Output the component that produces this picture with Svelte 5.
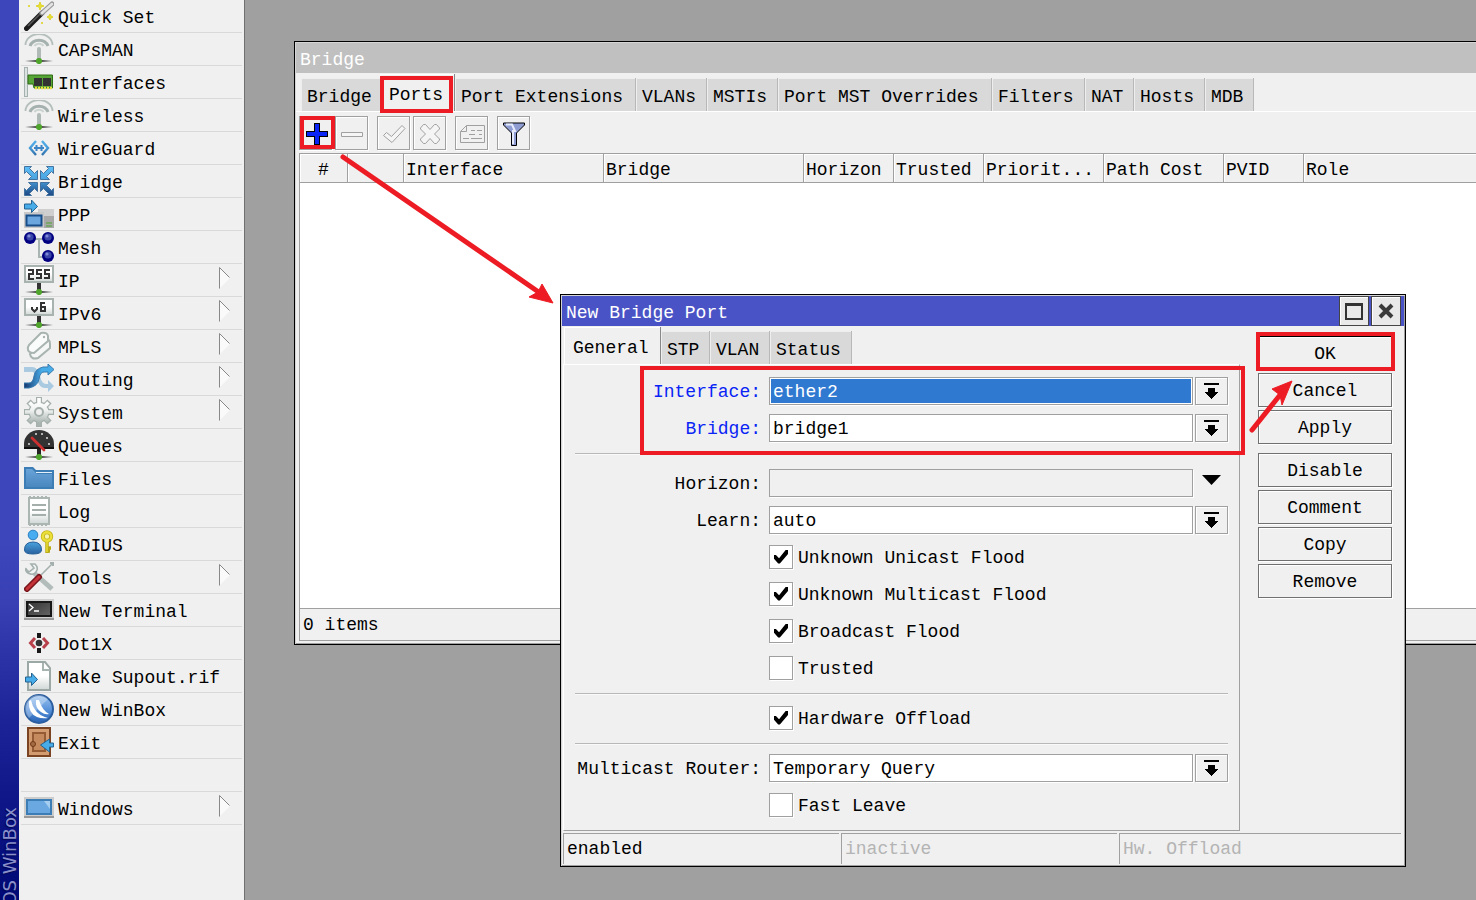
<script>
  const base = `<path d="M1 27h28" stroke="url(#fade)" stroke-width="1.6"/><circle cx="15" cy="27" r="3.1" fill="#4fa52c"/>`;
  const antenna = `<path d="M1.500 11a13.500 11 0 0 1 27 0" fill="none" stroke="#b4bfbc" stroke-width="1.800"/><path d="M6 12a9.500 8.500 0 0 1 18 0" fill="none" stroke="#a5b1ae" stroke-width="3"/><path d="M10.500 12a5 4 0 0 1 9 0" fill="none" stroke="#ccd4d2" stroke-width="2"/><path d="M15 15v12" stroke="#afbab7" stroke-width="4" stroke-linecap="round"/>${base}`;
  const board = `<rect x="1" y="1" width="28" height="16" fill="url(#paper)" stroke="#a8b3b0" stroke-width="2"/><path d="M15 18v7" stroke="#333" stroke-width="4"/>${base}`;
  const ball = (x, y) => `<circle cx="${x}" cy="${y}" r="6" fill="#000080"/><circle cx="${x}" cy="${y - 1}" r="3.6" fill="#3a45a8"/><circle cx="${x - 1}" cy="${y - 2}" r="1.6" fill="#8089d8"/>`;
  const corner = 'M.5.500H7.500L5.500 2.500 10.500 7.500 13.500 4.500V13.500H4.500L7.500 10.500 2.500 5.500.500 7.500z';

  const art = {
    wand: `<path d="M2.500 27.500L18 12" stroke="#1c1c1c" stroke-width="5" stroke-linecap="round"/><path d="M4 25L17 12" stroke="#5a5a5a" stroke-width="1.500"/><path d="M18 12l10-9" stroke="#9a9a9a" stroke-width="5" stroke-linecap="round"/><path d="M18 12l10-9" stroke="#e4e4e4" stroke-width="2.500" stroke-linecap="round"/><path d="M16 1l1 3 3 1-3 1-1 3-1-3-3-1 3-1zM26 13l1 2 2 1-2 1-1 2-1-2-2-1 2-1z" fill="#e8e034" stroke="#ddd42c"/><path d="M4 4h2v2H4zM17 21h2v2h-2z" fill="#e2d94a"/>`,
    antenna,
    card: `<rect x=".5" y=".5" width="3" height="29" fill="#dce3e1" stroke="#a5b1ae"/><path d="M4 8h24.500v13H10l-1-4H4z" fill="#57a536" stroke="#2f6d14"/><path d="M10 11h8v8h-8zM19 11h8v8h-8z" fill="#333"/><path d="M11 21h17" stroke="#e8df43" stroke-width="2.500" stroke-dasharray="2 1"/>`,
    wireguard: `<path d="M12 8l-6 7 6 7M18 8l6 7-6 7" fill="none" stroke="url(#blue)" stroke-width="2.400"/><path d="M10 15h10M12.500 12v6M17.500 12v6" fill="none" stroke="#3c86c8" stroke-width="2"/>`,
    bridge: `<g fill="url(#blue)" stroke="#45739f"><path d="${corner}"/><path d="M29.500.500H22.500L24.500 2.500 19.500 7.500 16.500 4.500V13.500H25.500L22.500 10.500 27.500 5.500 29.500 7.500z"/><path d="M.5 29.500H7.500L5.500 27.500 10.500 22.500 13.500 25.500V16.500H4.500L7.500 19.500 2.500 24.500.500 22.500z"/><path d="M29.500 29.500H22.500L24.500 27.500 19.500 22.500 16.500 25.500V16.500H25.500L22.500 19.500 27.500 24.500 29.500 22.500z"/></g>`,
    ppp: `<path d="M14 10h16v19H14z" fill="#cfcfcf"/><path d="M20 17h10v12H20z" fill="#a8a8a8"/><path d="M22 24h6M22 27h6" stroke="#4fa52c"/><path d="M0 13h20v16H0z" fill="#c8c8c8"/><rect x="2.500" y="16.500" width="15" height="10" fill="#6ba6de" stroke="#174d88" stroke-width="2"/><path d="M.5 5h7V1l6 6.500-6 6V10h-7z" fill="#48ace9" stroke="#236392"/>`,
    mesh: `<path d="M8 7h14M15 7v18h7" fill="none" stroke="#a8b5b3" stroke-width="2"/>${ball(6, 6)}${ball(24, 6)}${ball(24, 24)}`,
    ip: `${board}<path d="M4 5h5v4H5v5h5M18 5h-5v4h4v4h-5M26 5h-5v4h4v4h-5" fill="none" stroke="#333" stroke-width="2"/>`,
    ipv6: `${board}<path d="M8 9v2l2.500 2.500L13 11V9M21 5h-4v8h4V9h-4" fill="none" stroke="#333" stroke-width="2"/>`,
    mpls: `<path d="M6 23L21 9q5-2 5 4v4L14 27q-7 2-8-4z" fill="#f4f7f6" stroke="#a8b4b0" stroke-width="2"/><path d="M5 14L17 2q6-1 7 3v5L10 22q-7 0-6-6z" fill="#fafcfb" stroke="#a8b4b0" stroke-width="2"/><circle cx="20" cy="6" r="1.200" fill="#a8b4b0"/>`,
    routing: `<path d="M0 3h8q6 0 8 9t7 8h1v-4l6 6-6 6v-4h-3q-6 0-8-9T6 8H0z" fill="#a9cae0"/><path d="M0 19h5q4 0 5-7t9-9h5V0l6 5.500-6 5.500V8h-4q-4 0-5 7T5 24H0z" fill="url(#blueflip)" stroke="#387aae"/>`,
    gear: `<g stroke="#a5b0ad" stroke-width="6"><path d="M15 0v30M0 15h30M4.500 4.500l21 21M25.500 4.500l-21 21"/></g><circle cx="15" cy="15" r="10.500" fill="#a5b0ad"/><g stroke="url(#steel)" stroke-width="3.600"><path d="M15.010 1L15 29M1 15.010L29 15M5.500 5.500l19 19M24.500 5.500l-19 19"/></g><circle cx="15" cy="15" r="9.300" fill="url(#steel)"/><circle cx="15" cy="15" r="4" fill="#efefef" stroke="#a5b0ad" stroke-width="2"/>`,
    queue: `<path d="M0 19v-5a15 14 0 0 1 30 0v5z" fill="#333"/><path d="M0 17h30v2H0z" fill="#111"/><g fill="#dcdcdc"><circle cx="5" cy="14" r="1"/><circle cx="12" cy="4" r="1"/><circle cx="18" cy="4" r="1"/><circle cx="23" cy="8" r="1"/><circle cx="25" cy="14" r="1"/></g><path d="M15 19v7" stroke="#222" stroke-width="4"/><path d="M8 8l12 12" stroke="#cc3030" stroke-width="2.800" stroke-linecap="round"/>${base}`,
    folder: `<path d="M0 4h9l3 3h18v19H0z" fill="#3d7db5"/><path d="M12 9.500h16" stroke="#e5f1fa"/><path d="M2 6h6l5 5h15v13H2z" fill="url(#folder)"/>`,
    log: `<path d="M5 2h20v26H5z" fill="url(#paper)" stroke="#abb6b3" stroke-width="2"/><path d="M5 1h20M5 29h20" stroke="#abb6b3" stroke-width="3" stroke-dasharray="2 2"/><path d="M8 9h14M8 14h14M8 19h14" stroke="#a4afac" stroke-width="2"/>`,
    radius: `<circle cx="9" cy="6" r="4.800" fill="#48adf0" stroke="#2b7fc0"/><path d="M.5 21q0-8 8.500-8t8.500 8q0 4-8.500 4T.500 21z" fill="url(#blue)" stroke="#245f98"/><path d="M23 12v12M22 19h5M22 22h4" stroke="#b9aa16" stroke-width="3.500"/><circle cx="23" cy="7.500" r="4.200" fill="#f7f3b1" stroke="#c4b41c" stroke-width="4"/><circle cx="23" cy="7.500" r="4.200" fill="none" stroke="#ebdf3a" stroke-width="2.400"/><path d="M23 12v11" stroke="#e8dc35" stroke-width="1.500"/>`,
    tools: `<path d="M9 10l19 17" stroke="#b2bcba" stroke-width="5"/><path d="M2 7l3 3 5-4-3-4 4 0q4 4 1 8t-8 1q-3-2-2-5zM17 13L28 2" fill="#f2f5f4" stroke="#a4b0ad" stroke-width="1.600"/><path d="M26 1h3v3" fill="none" stroke="#a4b0ad" stroke-width="2"/><path d="M3 27L15 15" stroke="#78151a" stroke-width="6" stroke-linecap="round"/><path d="M3 27L15 15" stroke="#c33338" stroke-width="3" stroke-linecap="round"/>`,
    terminal: `<path d="M0 4h30v20H0z" fill="#d0d0d0"/><path d="M0 23h30v2H0z" fill="#999"/><rect x="3" y="7" width="24" height="14" fill="url(#screen)" stroke="#181818" stroke-width="2"/><path d="M5 9l4 3.500L5 16M10 16h5" fill="none" stroke="#fff" stroke-width="1.300"/>`,
    dot1x: `<path d="M11 10l-4.500 5 4.500 5M19 10l4.500 5-4.500 5" fill="none" stroke="#b8424b" stroke-width="3"/><path d="M15 5v5M15 20v5" stroke="#171717" stroke-width="4"/><circle cx="15" cy="15" r="3.300" fill="#333"/>`,
    page: `<path d="M4 1h17l5 6v22H4z" fill="url(#paper)" stroke="#9ca8a5" stroke-width="2"/><path d="M19 2v7h7" fill="#fff" stroke="#a8b4b0" stroke-width="2"/><path d="M1.500 16h6v-4l6 6.500-6 6V21h-6z" fill="#48ace9" stroke="#236392"/>`,
    winbox: `<circle cx="15" cy="15" r="14" fill="url(#globe)" stroke="#2b5e9f" stroke-width="2"/><path d="M5 24A13 13 0 0 1 24 5z" fill="#fff" fill-opacity=".3"/><path d="M5 7q-1 12 8 16 5 2 11 1-8-2-12-7T7 6zM12 6q-1 8 5 12 4 3 8 2-7-4-10-14z" fill="#fff"/>`,
    exit: `<rect x="4" y="1" width="22" height="28" fill="#d39b70" stroke="#7a4322" stroke-width="2"/><path d="M9 6h12v18H9z" fill="#c58a5e" stroke="#955b35" stroke-width="2"/><circle cx="9" cy="17" r="2.500" fill="#a56b40" stroke="#6f3919"/><path d="M29.500 16h-4v-4l-9 6 9 7v-5h4z" fill="#48ace9" stroke="#236392"/>`,
    windows: `<path d="M0 4h30v20H0z" fill="#ccc"/><path d="M0 23h30v2H0z" fill="#999"/><rect x="3" y="7" width="24" height="14" fill="#6aa8e2" stroke="#3d7db5" stroke-width="2"/><path d="M20 8h6v8z" fill="#a5cdef"/>`
  };

  const menu = [
    ['Quick Set', 'wand'], ['CAPsMAN', 'antenna'], ['Interfaces', 'card'], ['Wireless', 'antenna'],
    ['WireGuard', 'wireguard'], ['Bridge', 'bridge'], ['PPP', 'ppp'], ['Mesh', 'mesh'],
    ['IP', 'ip', true], ['IPv6', 'ipv6', true], ['MPLS', 'mpls', true], ['Routing', 'routing', true],
    ['System', 'gear', true], ['Queues', 'queue'], ['Files', 'folder'], ['Log', 'log'],
    ['RADIUS', 'radius'], ['Tools', 'tools', true], ['New Terminal', 'terminal'], ['Dot1X', 'dot1x'],
    ['Make Supout.rif', 'page'], ['New WinBox', 'winbox'], ['Exit', 'exit'], ['', ''], ['Windows', 'windows', true]
  ];

  const listTabs = ['Bridge', 'Ports', 'Port Extensions', 'VLANs', 'MSTIs', 'Port MST Overrides', 'Filters', 'NAT', 'Hosts', 'MDB'];
  const portTabs = ['General', 'STP', 'VLAN', 'Status'];
  const tabWidth = (label, active) => label.length * 11 + (active ? 20 : 16);

  const columns = [
    ['#', 48], ['', 56], ['Interface', 200], ['Bridge', 200], ['Horizon', 90], ['Trusted', 90],
    ['Priorit...', 120], ['Path Cost', 120], ['PVID', 80], ['Role', null]
  ];

  const actions = [['OK', 'Cancel', 'Apply'], ['Disable', 'Comment', 'Copy', 'Remove']];
  let flags = $state({ unicast: true, multicast: true, broadcast: true, trusted: false, offload: true, leave: false });
</script>

{#snippet tabBar(tabs, current)}
  <div class="tabs">
    {#each tabs as tab}
      <button class="tab" class:active={tab === current} style:width="{tabWidth(tab, tab === current)}px">{tab}</button>
    {/each}
  </div>
{/snippet}

{#snippet combo(id, label, value, kind)}
  <div class="row">
    <label for={id} class:blue={kind}>{label}:</label>
    <div class="box"><select {id} class:marked={kind === 'marked'}><option>{value}</option></select></div>
    <button type="button" class="drop" aria-label={`${label} options`}>
      <svg width="17" height="18" shape-rendering="crispEdges"><path d="M1 1h15v2H1zM5 6h7v4h4l-7.500 7L1 10h4z" /></svg>
    </button>
  </div>
{/snippet}

{#snippet check(key, label)}
  <div class="row">
    <label class="check"><input type="checkbox" bind:checked={flags[key]} /><span>{label}</span></label>
  </div>
{/snippet}

<div class="shell">
  <svg width="0" height="0" class="defs" aria-hidden="true">
    <defs>
      <linearGradient id="fade" gradientUnits="userSpaceOnUse" x1="1" x2="29" y1="0" y2="0"><stop stop-color="#333" stop-opacity="0" /><stop offset=".4" stop-color="#222" /><stop offset=".6" stop-color="#222" /><stop offset="1" stop-color="#333" stop-opacity="0" /></linearGradient>
      <linearGradient id="paper" x2="0" y2="1"><stop offset=".5" stop-color="#fff" /><stop offset="1" stop-color="#cfd7d5" /></linearGradient>
      <linearGradient id="steel" gradientUnits="userSpaceOnUse" x1="0" x2="0" y1="4" y2="26"><stop stop-color="#fff" /><stop offset=".4" stop-color="#f0f3f2" /><stop offset="1" stop-color="#a9b4b1" /></linearGradient>
      <linearGradient id="blue" gradientUnits="userSpaceOnUse" x1="0" x2="0" y1="2" y2="29"><stop stop-color="#5cbcf5" /><stop offset=".4" stop-color="#4aa4e0" /><stop offset="1" stop-color="#1f4c88" /></linearGradient>
      <linearGradient id="blueflip" x1="0" x2="1"><stop stop-color="#15366c" /><stop offset=".6" stop-color="#48ace9" /></linearGradient>
      <linearGradient id="folder" x2="0" y2="1"><stop stop-color="#68a3d8" /><stop offset="1" stop-color="#4a87bf" /></linearGradient>
      <linearGradient id="screen" x2="1" y2="1"><stop stop-color="#333" /><stop offset="1" stop-color="#666" /></linearGradient>
      <linearGradient id="globe" x2="0" y2="1"><stop stop-color="#9cc4f0" /><stop offset=".6" stop-color="#4f8bd6" /><stop offset="1" stop-color="#2862b4" /></linearGradient>
    </defs>
  </svg>

  <aside class="strip"><span>RouterOS WinBox</span></aside>

  <nav>
    {#each menu as [label, icon, sub]}
      {#if label}
        <button class="item">
          <svg width="30" height="30" viewBox="0 0 30 30" aria-hidden="true">{@html art[icon]}</svg>
          <span>{label}</span>
          {#if sub}
            <svg class="sub" width="12" height="22" aria-hidden="true"><path d="M1 1l10 10L1 21z" fill="#fafafa" /><path d="M.5 21.500V.500l10 10" fill="none" stroke="#888" /></svg>
          {/if}
        </button>
      {:else}
        <div class="item"></div>
      {/if}
    {/each}
  </nav>

  <main>
    <section class="window list">
      <header class="title">Bridge</header>
      {@render tabBar(listTabs, 'Ports')}
      <div class="toolbar">
        <button aria-label="Add"><svg width="23" height="23" shape-rendering="crispEdges"><path d="M9.500.500h5v8h8v5h-8v8h-5v-8h-8v-5h8z" fill="#0a24f5" stroke="#000" /></svg></button>
        <button aria-label="Remove"><svg width="23" height="23"><path d="M.5 9.500h21v4H.500z" fill="#f5f5f5" stroke="#a0a0a0" /></svg></button>
        <button class="apart" aria-label="Enable"><svg width="23" height="23"><path d="M.5 12.500l3-3 5 4L19 2.500l3 3-13 14z" fill="#f5f5f5" stroke="#a0a0a0" /></svg></button>
        <button aria-label="Disable"><svg width="23" height="23"><path d="M1.500 5l3-3.500h2l4.500 5 4.500-5h2l3 3.500v1l-5 5 5 5v1l-3 3.500h-2l-4.500-5-4.500 5h-2l-3-3.500v-1l5-5-5-5z" fill="#f5f5f5" stroke="#a0a0a0" /></svg></button>
        <button class="apart" aria-label="Comment"><svg width="25" height="23"><path d="M.5 8.500l6-6h18v17H.500zM.5 8.500h6v-6M3 15.500h19M11 7.500h11M9 11.500h13" fill="none" stroke="#a0a0a0" /><path d="M15 7.500h2M19 11.500h-4M9 15.500h2" stroke="#efefef" stroke-width="2" /></svg></button>
        <button class="apart" aria-label="Filter"><svg width="23" height="25"><path d="M.5 1h21v2L13.500 11v12.500h-5V11L.500 3z" fill="#8f9dd2" stroke="#000" /><path d="M3 2.500h6l3 6.500h-2v13" fill="none" stroke="#e6ebfd" stroke-width="2" /></svg></button>
      </div>
      <div class="sheet">
        <table>
          <colgroup>
            {#each columns as [, width]}<col style:width={width ? `${width}px` : 'auto'} />{/each}
          </colgroup>
          <thead><tr>{#each columns as [name]}<th scope="col">{name}</th>{/each}</tr></thead>
        </table>
      </div>
      <footer class="count">0 items</footer>
    </section>

    <section class="window dialog">
      <header class="title">
        <span>New Bridge Port</span>
        <button aria-label="Maximize"><svg width="18" height="18" shape-rendering="crispEdges"><path d="M1 2h16v15H1z" fill="none" stroke="#333" stroke-width="2" /><path d="M0 1h18v3H0z" fill="#333" /></svg></button>
        <button aria-label="Close"><svg width="16" height="16"><path d="M2 2l12 12M14 2L2 14" stroke="#3b3b3b" stroke-width="4" /></svg></button>
      </header>
      <div class="content">
        <div class="left">
          {@render tabBar(portTabs, 'General')}
          <form class="pane">
            {@render combo('interface', 'Interface', 'ether2', 'marked')}
            {@render combo('bridge', 'Bridge', 'bridge1', 'changed')}
            <hr class="wide" />
            <div class="row">
              <label for="horizon">Horizon:</label>
              <div class="box empty"><input id="horizon" type="text" /></div>
              <button type="button" class="drop plain" aria-label="Show horizon"><svg width="19" height="10"><path d="M0 0h19l-9.500 10z" /></svg></button>
            </div>
            {@render combo('learn', 'Learn', 'auto')}
            {@render check('unicast', 'Unknown Unicast Flood')}
            {@render check('multicast', 'Unknown Multicast Flood')}
            {@render check('broadcast', 'Broadcast Flood')}
            {@render check('trusted', 'Trusted')}
            <hr />
            {@render check('offload', 'Hardware Offload')}
            <hr />
            {@render combo('router', 'Multicast Router', 'Temporary Query')}
            {@render check('leave', 'Fast Leave')}
          </form>
        </div>
        <div class="actions">
          {#each actions as group}
            <div class="group">
              {#each group as name}<button class:primary={name === 'OK'}>{name}</button>{/each}
            </div>
          {/each}
        </div>
      </div>
      <footer class="states"><span>enabled</span><span class="off">inactive</span><span class="off">Hw. Offload</span></footer>
    </section>

    <svg class="marks" aria-hidden="true">
      <g fill="none" stroke="#ed1c24" stroke-width="4">
        <path d="M137 78h69v33h-69zM57 118h31v29H57zM397 368h601v85H397zM1013 334h135v35h-135z" />
        <path d="M98 157l197 136M1007 430l28-35" stroke-width="5" stroke-linecap="round" />
      </g>
      <path d="M308 303l-11-19-4 8-9 5zM1047 381l-20 8 8 6 2 10z" fill="#ed1c24" stroke="#ed1c24" />
    </svg>
  </main>
</div>

<style>
  :global(body) { background: #a0a0a0; overflow: hidden; }
  * { box-sizing: border-box; }
  .shell {
    display: flex; min-height: 100vh; color: #000;
    font: 18px/24px "Liberation Mono", monospace;
  }
  .defs { position: absolute; }
  button, select, input { font: inherit; color: inherit; margin: 0; padding: 0; border-radius: 0; }
  button { background: none; border: 0; white-space: nowrap; }

  .strip {
    width: 19px; flex: none; height: 100vh; overflow: hidden; color: #8b90ca;
    background: linear-gradient(#3e46bc 60%, #3840b4 67%, #1b2397 80%, #000875);
  }
  .strip span {
    display: block; margin-top: calc(100vh - 93px); writing-mode: vertical-rl; transform: rotate(180deg);
    font: 18px/19px "DejaVu Sans", sans-serif; white-space: nowrap; text-shadow: -1px -1px 1px #000650;
  }

  nav { width: 226px; flex: none; padding: 0 2px; background: #f0f0f0; border-right: 1px solid #707070; }
  .item {
    display: flex; align-items: center; gap: 4px; width: 100%; height: 33px; padding: 0 11px 0 3px;
    border-bottom: 1px solid #d9d9d9; text-align: left;
  }
  .item span { flex: 1; padding-top: 3px; }
  .sub { margin-bottom: 4px; }

  main { flex: 1; position: relative; min-width: 0; overflow: hidden; background: #a0a0a0; }
  .window {
    position: absolute; display: flex; flex-direction: column; background: #f0f0f0;
    border: 1px solid #000; box-shadow: inset 1px 1px #d5d5d5, inset -1px -1px #a0a0a0; padding: 1px;
  }
  .list { left: 49px; top: 41px; right: -8px; height: 604px; }
  .dialog { left: 315px; top: 294px; width: 846px; }
  .title { display: flex; align-items: center; height: 30px; flex: none; padding: 4px 3px 0 4px; background: #c0c0c0; color: #fff; }
  .dialog .title { gap: 2px; padding-top: 0; background: #4a53c5; }
  .dialog .title span { flex: 1; padding-top: 4px; }
  .dialog .title button {
    display: grid; place-items: center; width: 30px; height: 30px; background: #e9e9e9;
    border: 1px solid #444; box-shadow: inset 1px 1px #fff;
  }

  .tabs { display: flex; align-items: flex-end; padding-left: 5px; }
  .list .tabs { height: 39px; border-bottom: 1px solid #fff; }
  .tab {
    height: 33px; flex: none; padding: 5px 0 0 6px; text-align: left; background: #d9d9d9;
    border-right: 1px solid #b8b8b8; box-shadow: inset 1px 1px #eee;
  }
  .tab.active { height: 37px; padding: 5px 0 0 9px; background: #f0f0f0; border-right-color: #888; box-shadow: inset 1px 1px #fff; }
  .tab + .active { margin-left: -3px; }

  .toolbar { display: flex; gap: 3px; padding: 4px 3px 3px; flex: none; }
  .toolbar button {
    display: grid; place-items: center; width: 33px; height: 34px; border: 1px solid #a0a0a0;
    box-shadow: inset 1px 1px #fff, 1px 1px #fff;
  }
  .toolbar .apart { margin-left: 6px; }
  .toolbar svg { margin: 2px 0 0 1px; }
  .sheet { flex: 1; margin-left: 3px; background: #fff; border: 1px solid #a0a0a0; }
  table { width: 100%; table-layout: fixed; border-collapse: separate; border-spacing: 0; }
  th {
    height: 29px; padding: 3px 0 0 2px; font-weight: 400; text-align: left; white-space: nowrap; background: #f0f0f0;
    border-right: 1px solid #a0a0a0; border-bottom: 1px solid #a0a0a0; box-shadow: inset 1px 1px #fff;
  }
  th:first-child { padding-left: 0; text-align: center; }
  .count { height: 32px; flex: none; margin: 0 0 2px 3px; padding: 4px 3px; border: 1px solid #a0a0a0; border-top: 0; }

  .content { display: flex; }
  .left { flex: 1; padding-left: 1px; }
  .dialog .tabs { height: 38px; padding-left: 1px; }
  .pane {
    padding: 7px 11px; border: 1px solid #fff; border-right-color: #a0a0a0; border-bottom-color: #a0a0a0;
  }
  .row { display: grid; grid-template-columns: 186px 1fr 33px; align-items: center; height: 37px; column-gap: 2px; }
  .row > label:not(.check) { padding: 3px 0 0; text-align: right; white-space: nowrap; }
  .row > .box { margin-left: 6px; }
  .blue { color: #0a24f5; }
  .box { height: 28px; background: #fff; border: 1px solid #a0a0a0; box-shadow: 1px 1px #fff; padding: 1px; }
  .box.empty { background: #f0f0f0; }
  .box select, .box input { display: block; width: 100%; height: 24px; border: 0; padding: 1px 2px 0; background: transparent; appearance: none; outline: 0; }
  .box .marked { background: #2f79d1; color: #fff; }
  .drop { display: grid; place-items: center; height: 28px; border: 1px solid #a0a0a0; box-shadow: inset 1px 1px #fff, 1px 1px #fff; }
  .drop.plain { border: 0; box-shadow: none; padding-bottom: 5px; }
  .check { grid-column: 1 / -1; display: flex; align-items: center; gap: 5px; margin-left: 194px; }
  .check span { padding-top: 3px; }
  .check input {
    width: 24px; height: 24px; appearance: none; background: #fff; border: 1px solid #a0a0a0; box-shadow: 1px 1px #fff;
  }
  .check input:checked::before {
    content: ""; display: block; width: 14px; height: 14px; margin: 4px; background: #000;
    clip-path: polygon(0 40%, 14% 40%, 36% 62%, 86% 0, 100% 0, 100% 32%, 42% 100%, 30% 100%, 0 66%);
  }
  hr { height: 1px; margin: 7px 0 5px; border: 0; background: #b8b8b8; box-shadow: 0 1px #fafafa; }
  hr.wide { margin-bottom: 10px; }

  .actions { display: flex; flex-direction: column; gap: 9px; width: 164px; padding: 10px 12px 0 18px; }
  .group { display: flex; flex-direction: column; gap: 3px; }
  .actions button { height: 34px; padding-top: 2px; border: 1px solid #707070; box-shadow: inset 1px 1px #fff, 1px 1px #fff; }
  .actions .primary { border-color: #000; }
  .states { display: grid; grid-template-columns: 276px 276px 1fr; gap: 2px; height: 29px; margin: 2px 3px 3px 1px; }
  .states span { padding: 3px; border: 1px solid #a0a0a0; border-width: 1px 0 0 1px; }
  .states .off { color: #b4b4b4; }
  .marks { position: absolute; inset: 0; width: 100%; height: 100%; pointer-events: none; }
</style>
